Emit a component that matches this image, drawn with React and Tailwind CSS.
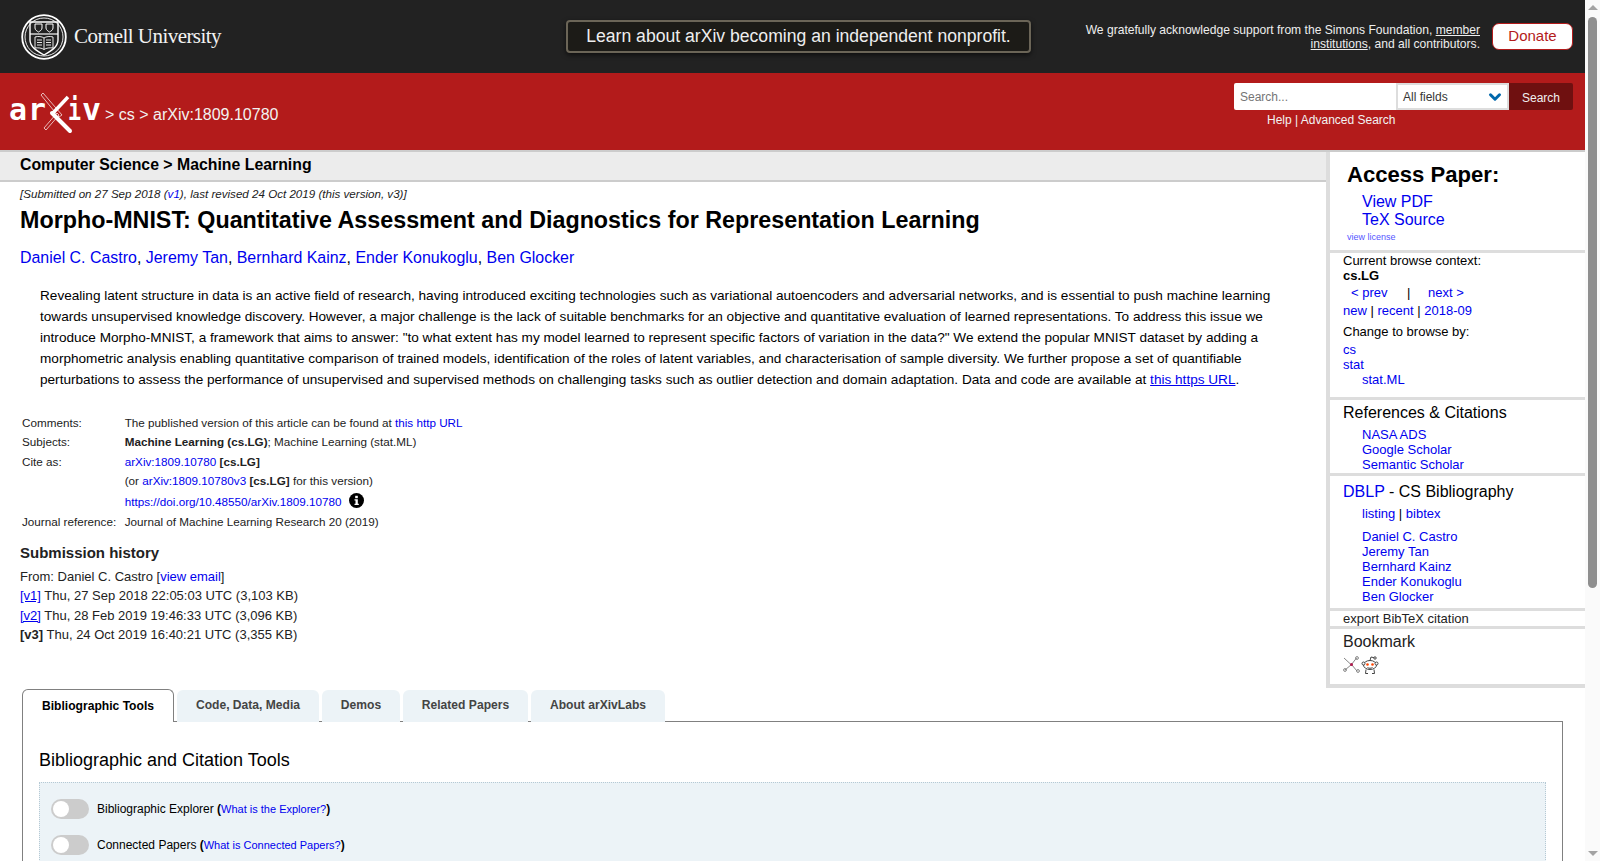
import { ChevronDown } from "lucide-react";

const A = ({ children, className = "" }) => <a className={`text-[#0000ee] ${className}`}>{children}</a>;

function CornellSeal() {
  return (
    <svg width="46" height="46" viewBox="0 0 46 46" fill="none" stroke="#fff" className="shrink-0">
      <circle cx="23" cy="23" r="21.8" strokeWidth="1.8" />
      <circle cx="23" cy="23" r="19" strokeWidth="0.9" />
      <path d="M9 8h28v18c0 7-7 11-14 15C16 37 9 33 9 26z" strokeWidth="1.4" />
      <path d="M9 20h28" strokeWidth="1.200" />
      <path d="M14 10h7v4c0 2-2 3-3.500 4-1.500-1-3.500-2-3.500-4zM25 10h7v4c0 2-2 3-3.500 4-1.500-1-3.500-2-3.500-4z" strokeWidth="1" />
      <path d="M14 23c3-1 7-.5 9 1 2-1.500 6-2 9-1v11c-3-.5-7 0-9 1.500-2-1.500-6-2-9-1.500zM23 24v11.500M16 26h5M16 28.500h5M16 31h5M25 26h5M25 28.500h5M25 31h5" strokeWidth="0.9" />
    </svg>
  );
}

function ArxivLogo() {
  const font = { fill: "#fff", fontFamily: "'DejaVu Sans Mono', monospace", fontWeight: 700, fontSize: 31, lengthAdjust: "spacingAndGlyphs" };
  return (
    <svg width="90" height="42" viewBox="0 0 90 42" className="shrink-0 overflow-visible">
      <text x="-1" y="27" textLength="18" {...font}>a</text>
      <text x="18" y="27" textLength="18" {...font}>r</text>
      <text x="58" y="27" textLength="13" {...font}>i</text>
      <text x="72" y="27" textLength="19" {...font}>v</text>
      <path d="M33 0 L52 22 L49 24 L31 2z" fill="#b31b1b" stroke="#fff" strokeWidth="0.7" />
      <path d="M34 35 L47 20 L49 22 L36 37z" fill="#b31b1b" stroke="#fff" strokeWidth="0.7" />
      <path d="M58 4 L43 20" stroke="#fff" strokeWidth="3.500" />
      <path d="M42 20 L60 38" stroke="#fff" strokeWidth="4" strokeLinecap="round" />
    </svg>
  );
}

function ScienceWiseIcon() {
  return (
    <svg width="17" height="17" viewBox="0 0 17 17" fill="none" stroke="#777" strokeWidth="0.9">
      <path d="M1 2l7 6.500M8.500 8.500l5-6.500M8.500 8.500l5.500 6.500M8.500 8.500L2 14" />
      <circle cx="14" cy="2" r="1.400" />
      <circle cx="15" cy="15" r="1.400" />
      <circle cx="2" cy="14" r="1.400" />
      <circle cx="8.500" cy="8.500" r="1.500" fill="#b01a4d" stroke="none" />
    </svg>
  );
}

function RedditIcon() {
  return (
    <svg width="18" height="18" viewBox="0 0 18 18" fill="none" stroke="#444" strokeWidth="1">
      <ellipse cx="9" cy="9" rx="6.500" ry="4.500" fill="#fff" />
      <circle cx="2.500" cy="7.500" r="1.500" fill="#fff" />
      <circle cx="15.500" cy="7.500" r="1.500" fill="#fff" />
      <path d="M9 4.500l1-3.500 3 .7" />
      <circle cx="14" cy="2" r="1.200" fill="#fff" />
      <circle cx="6.500" cy="8.500" r="1.300" fill="#ff4500" stroke="none" />
      <circle cx="11.500" cy="8.500" r="1.300" fill="#ff4500" stroke="none" />
      <path d="M6.500 11.500c1.500 1 3.500 1 5 0M5 13.500l-.5 4h2.500M13 13.500l.5 4H11" />
    </svg>
  );
}

function InfoIcon() {
  return (
    <svg width="15" height="15" viewBox="0 0 15 15" className="inline-block">
      <circle cx="7.500" cy="7.500" r="7.500" fill="#000" />
      <rect x="6.200" y="2.800" width="2.600" height="2.400" fill="#fff" />
      <path d="M5.500 6.300h3.300v4.500h1v1.300H5.500v-1.300h1V7.600h-1z" fill="#fff" />
    </svg>
  );
}

function Toggle({ children }) {
  return (
    <div className="flex h-9 items-center">
      <div className="relative h-5 w-[38px] rounded-full bg-[#cccccc]">
        <div className="absolute left-[2px] top-[2px] h-4 w-4 rounded-full bg-white" />
      </div>
      <div className="ml-2 text-[12px]">{children}</div>
    </div>
  );
}

function Sidebar() {
  const box = "border-b-[3px] border-[#dddddd]";
  return (
    <aside className="w-[259px] shrink-0 border-b-4 border-l-4 border-[#dddddd] text-[13px] leading-[15px] text-black">
      <div className={`${box} h-[101px] pl-[17px] pt-[10px]`}>
        <div className="text-[22.100px] font-bold leading-[26px]">Access Paper:</div>
        <div className="pl-[15px] pt-[5px] text-[16px] leading-[18px]">
          <div><A>View PDF</A></div>
          <div><A>TeX Source</A></div>
        </div>
        <div className="pt-[2px] text-[9px] leading-[12px] text-[#5555ff]">view license</div>
      </div>
      <div className={`${box} h-[147px] px-[13px]`}>
        <div className="h-[15px]">Current browse context:</div>
        <div className="h-[17px] font-bold">cs.LG</div>
        <div className="flex h-[18px] pl-2">
          <A className="w-[56px]">&lt;&nbsp;prev</A>
          <span className="w-[20px]">|</span>
          <A className="pl-[1px]">next&nbsp;&gt;</A>
        </div>
        <div className="h-[21px]"><A>new</A> | <A>recent</A> | <A>2018-09</A></div>
        <div className="h-[18px]">Change to browse by:</div>
        <div><A>cs</A></div>
        <div><A>stat</A></div>
        <div className="pl-[19px]"><A>stat.ML</A></div>
      </div>
      <div className={`${box} h-[76px] px-[13px] pt-[2px]`}>
        <div className="h-[25px] text-[16px] leading-[22px]">References &amp; Citations</div>
        <div className="pl-[19px]">
          <div><A>NASA ADS</A></div>
          <div><A>Google Scholar</A></div>
          <div><A>Semantic Scholar</A></div>
        </div>
      </div>
      <div className={`${box} h-[135px] px-[13px] pt-[5px]`}>
        <div className="h-[22px] text-[16px] leading-[22px]"><A>DBLP</A> - CS Bibliography</div>
        <div className="h-[22px] pl-[19px] leading-[22px]"><A>listing</A> | <A>bibtex</A></div>
        <div className="pl-[19px] pt-[4px]">
          <div><A>Daniel C. Castro</A></div>
          <div><A>Jeremy Tan</A></div>
          <div><A>Bernhard Kainz</A></div>
          <div><A>Ender Konukoglu</A></div>
          <div><A>Ben Glocker</A></div>
        </div>
      </div>
      <div className={`${box} h-[18px] px-[13px] text-[#222222]`}>export BibTeX citation</div>
      <div className="h-[55px] px-[13px] pt-[2px]">
        <div className="h-[22px] text-[16px] leading-[22px] text-[#222222]">Bookmark</div>
        <div className="flex gap-[1px] pt-[3px]">
          <ScienceWiseIcon />
          <RedditIcon />
        </div>
      </div>
    </aside>
  );
}

function MetaRow({ label, children, tall }) {
  return (
    <tr>
      <td className={`${tall ? "h-[21.500px]" : "h-[19.500px]"} whitespace-nowrap pl-[2px] pr-[8.500px] align-middle`}>{label}</td>
      <td className={tall ? "pt-[3px] align-middle" : "align-middle"}>{children}</td>
    </tr>
  );
}

export default function App() {
  const tabs = [
    ["Code, Data, Media", "w-[142px]"],
    ["Demos", "w-[78px]"],
    ["Related Papers", "w-[125px]"],
    ["About arXivLabs", "w-[134px]"],
  ];
  return (
    <div className="flex h-[861px] overflow-hidden bg-white font-['Liberation_Sans',Arial,sans-serif] text-[#222222]">
      <div className="w-[1585px] shrink-0">
        {/* top banner */}
        <header className="flex h-[73px] items-center bg-[#222222] text-white">
          <div className="flex w-[566px] shrink-0 items-center pl-[21px]">
            <CornellSeal />
            <span className="ml-[7px] font-['Liberation_Serif',serif] text-[21px] leading-none tracking-[-0.55px] text-[#f2f2f2]">Cornell University</span>
          </div>
          <div className="flex h-[33px] w-[465px] shrink-0 items-center justify-center rounded-[4px] border-2 border-[#6b6557] bg-[#1c1b17] text-[17.600px] text-[#eeeeee] shadow-[0_2px_5px_rgba(0,0,0,0.6)]">
            Learn about arXiv becoming an independent nonprofit.
          </div>
          <div className="w-[449px] shrink-0 text-right text-[12.100px] leading-[14px] text-[#eeeeee]">
            We gratefully acknowledge support from the Simons Foundation, <span className="underline">member<br />institutions</span>, and all contributors.
          </div>
          <div className="ml-3 flex h-[27px] w-[81px] items-center justify-center rounded-[7px] border border-[#b31b1b] bg-white text-[15px] text-[#b31b1b]">Donate</div>
        </header>

        {/* red bar */}
        <div className="flex h-[77px] bg-[#b31b1b] text-white">
          <div className="flex flex-1 items-start pl-[10px] pt-[20px]">
            <ArxivLogo />
            <div className="ml-[5px] pt-[13px] text-[16px] leading-[18px] text-[#f2f2f2]">&gt; cs &gt; arXiv:1809.10780</div>
          </div>
          <div className="w-[351px] shrink-0 pr-3 pt-[10px]">
            <div className="flex h-[27px]">
              <div className="flex w-[162px] items-center rounded-l-[2px] bg-white pl-[6px] text-[12px] text-[#757575]">Search...</div>
              <div className="flex w-[113px] items-center justify-between border-2 border-[#dddddd] bg-white pl-[5px] pr-[3px] text-[12px] text-[#363636]">
                All fields
                <ChevronDown size={18} strokeWidth={4} className="text-[#0068ac]" />
              </div>
              <div className="flex w-[64px] items-center justify-center rounded-r-[2px] bg-[#6f1010] pt-[2px] text-[12px] text-[#f0f0f0]">Search</div>
            </div>
            <div className="pl-[33px] pt-[2px] text-[12px] leading-[16px] text-[#f2f2f2]">Help | Advanced Search</div>
          </div>
        </div>
        <div className="h-[2px] bg-[#cccccc]" />

        <div className="flex">
          {/* abstract column */}
          <main className="w-[1326px] shrink-0 text-black">
            <div className="h-[30px] border-b-2 border-[#cccccc] bg-[#ececec] pl-5 text-[15.840px] font-bold leading-[26px]">Computer Science &gt; Machine Learning</div>
            <div className="pl-5 pt-[5px] text-[11.600px] italic leading-[14px] text-[#222222]">
              [Submitted on 27 Sep 2018 (<A>v1</A>), last revised 24 Oct 2019 (this version, v3)]
            </div>
            <h1 className="pl-5 pt-[3px] text-[23.300px] font-bold leading-[32px] text-black">Morpho-MNIST: Quantitative Assessment and Diagnostics for Representation Learning</h1>
            <div className="pl-5 pt-[12px] text-[15.950px] leading-[20px]">
              <A>Daniel C. Castro</A>, <A>Jeremy Tan</A>, <A>Bernhard Kainz</A>, <A>Ender Konukoglu</A>, <A>Ben Glocker</A>
            </div>
            <p className="w-[1290px] pl-10 pt-[17px] text-[13.600px] leading-[21px]">
              Revealing latent structure in data is an active field of research, having introduced exciting technologies such as variational autoencoders and adversarial networks, and is essential to push machine learning towards unsupervised knowledge discovery. However, a major challenge is the lack of suitable benchmarks for an objective and quantitative evaluation of learned representations. To address this issue we introduce Morpho-MNIST, a framework that aims to answer: "to what extent has my model learned to represent specific factors of variation in the data?" We extend the popular MNIST dataset by adding a morphometric analysis enabling quantitative comparison of trained models, identification of the roles of latent variables, and characterisation of sample diversity. We further propose a set of quantifiable perturbations to assess the performance of unsupervised and supervised methods on challenging tasks such as outlier detection and domain adaptation. Data and code are available at <a className="text-[#0000ee] underline">this https URL</a>.
            </p>
            <table className="ml-5 mt-[23px] border-collapse text-[11.700px] leading-[14px] text-[#222222]">
              <tbody>
                <MetaRow label="Comments:">The published version of this article can be found at <A>this http URL</A></MetaRow>
                <MetaRow label="Subjects:"><b>Machine Learning (cs.LG)</b>; Machine Learning (stat.ML)</MetaRow>
                <MetaRow label="Cite as:"><A>arXiv:1809.10780</A> <b>[cs.LG]</b></MetaRow>
                <MetaRow label="">(or <A>arXiv:1809.10780v3</A> <b>[cs.LG]</b> for this version)</MetaRow>
                <MetaRow label="" tall><A>https://doi.org/10.48550/arXiv.1809.10780</A> <span className="relative -top-[3px] ml-[4px] align-middle"><InfoIcon /></span></MetaRow>
                <MetaRow label="Journal reference:">Journal of Machine Learning Research 20 (2019)</MetaRow>
              </tbody>
            </table>
            <h2 className="pl-5 pt-[11px] text-[15px] font-bold leading-[20px] text-[#222222]">Submission history</h2>
            <div className="pl-5 pt-[4px] text-[13px] leading-[19.300px] text-[#222222]">
              <div>From: Daniel C. Castro [<A>view email</A>]</div>
              <div><A className="underline">[v1]</A> Thu, 27 Sep 2018 22:05:03 UTC (3,103 KB)</div>
              <div><A className="underline">[v2]</A> Thu, 28 Feb 2019 19:46:33 UTC (3,096 KB)</div>
              <div><b>[v3]</b> Thu, 24 Oct 2019 16:40:21 UTC (3,355 KB)</div>
            </div>
          </main>
          <Sidebar />
        </div>

        {/* labs tabs */}
        <section className="ml-[22px] mt-[1px] w-[1541px]">
          <div className="flex h-[33px] items-end">
            <div className="relative z-10 flex h-[33px] w-[152px] items-center justify-center rounded-t-[6px] border border-b-0 border-[#808080] bg-white text-[12.100px] font-bold text-black">Bibliographic Tools</div>
            <div className="flex gap-[3px] pl-[3px]">
              {tabs.map(([t, w]) => (
                <div key={t} className={`flex h-[32px] ${w} items-center justify-center rounded-t-[6px] bg-[#ecf3f7] pb-[2px] text-[12.100px] font-bold text-[#444444]`}>{t}</div>
              ))}
            </div>
          </div>
          <div className="-mt-px border border-[#808080] px-4 pb-4">
            <h3 className="pt-[27px] text-[18px] font-normal leading-[22px] text-black">Bibliographic and Citation Tools</h3>
            <div className="mt-[11px] border border-dotted border-[#b5c9d4] bg-[#ecf3f7] px-[11px] py-2 text-black">
              <Toggle>Bibliographic Explorer <b>(</b><A className="text-[11px]">What is the Explorer?</A><b>)</b></Toggle>
              <Toggle>Connected Papers <b>(</b><A className="text-[11px]">What is Connected Papers?</A><b>)</b></Toggle>
            </div>
          </div>
        </section>
      </div>

      {/* scrollbar */}
      <div className="relative w-[15px] shrink-0 bg-[#fafafa]">
        <div className="absolute left-[3px] top-[5px] h-0 w-0 border-x-[5px] border-b-[5px] border-x-transparent border-b-[#a3a3a3]" />
        <div className="absolute left-[3px] top-[17px] h-[571px] w-[9px] rounded-full bg-[#8f8f8f]" />
        <div className="absolute bottom-[5px] left-[3px] h-0 w-0 border-x-[5px] border-t-[5px] border-x-transparent border-t-[#a3a3a3]" />
      </div>
    </div>
  );
}
